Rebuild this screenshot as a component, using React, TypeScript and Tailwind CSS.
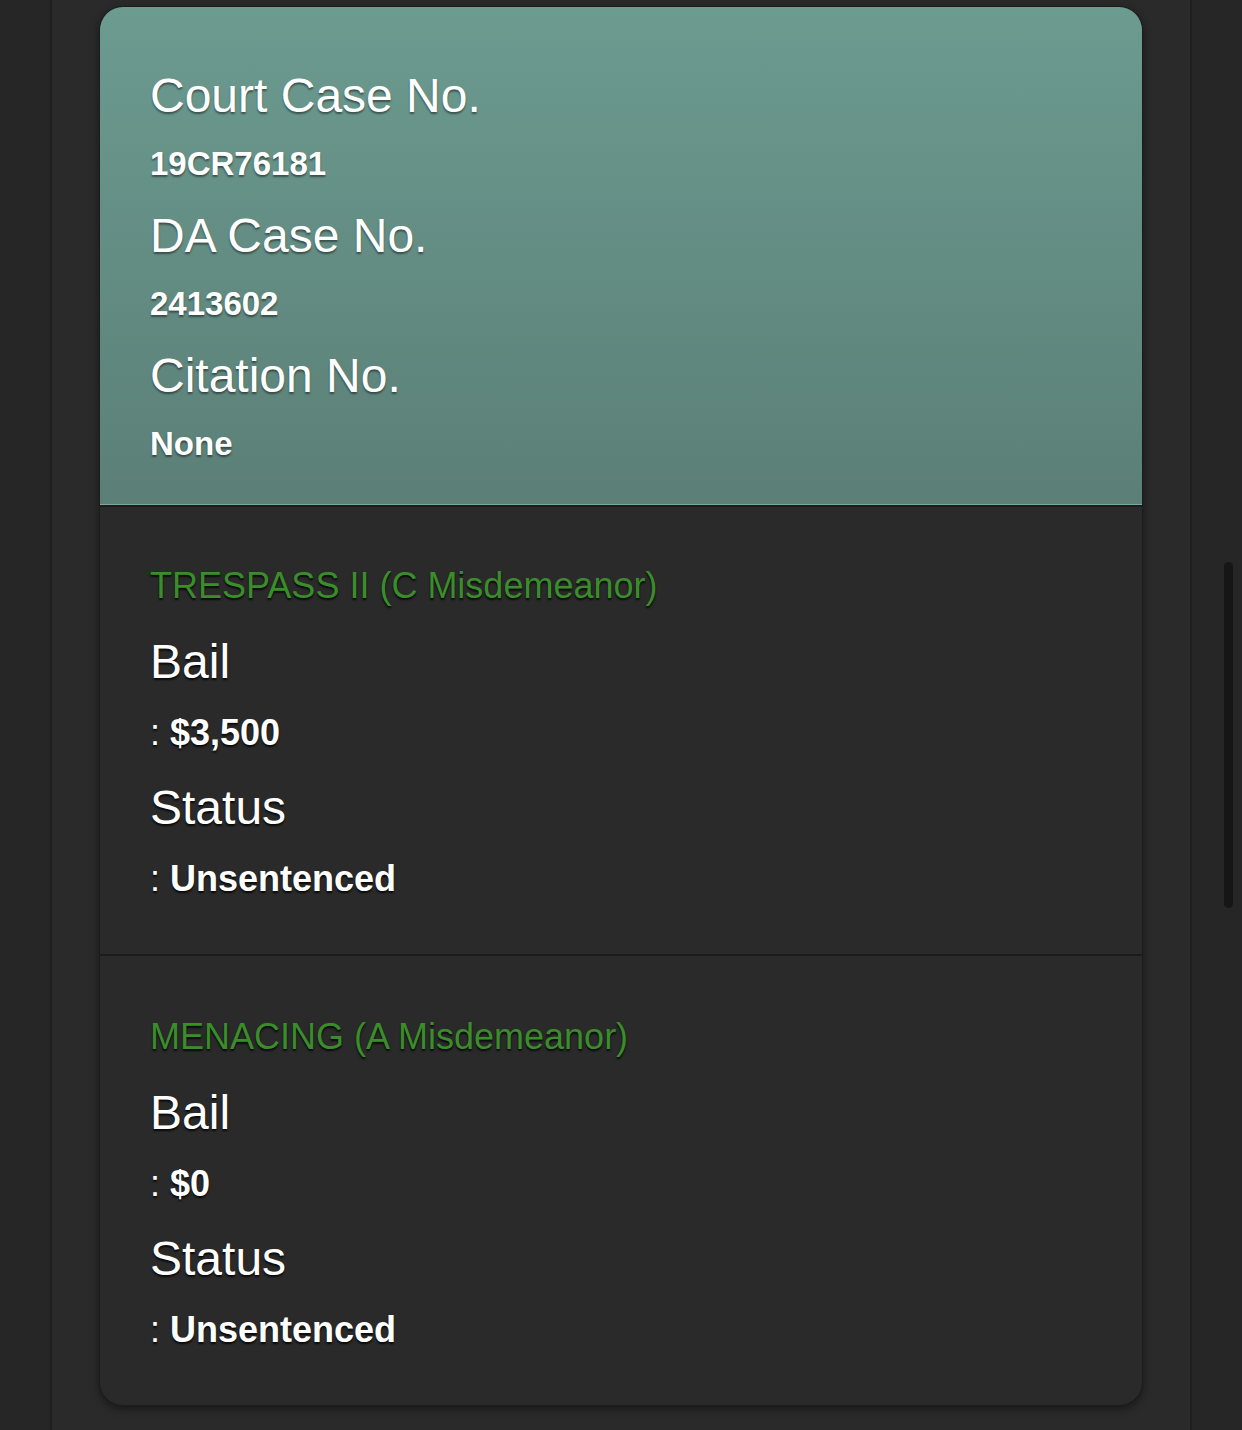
import React from "react";

const font = { fontFamily: '"Liberation Sans", Arial, Helvetica, sans-serif' };

function HeaderItem({ label, value, first }: { label: string; value: string; first?: boolean }) {
  return (
    <div className={first ? "" : "mt-[24px]"}>
      <div className="text-[48px] leading-[56px] text-white [text-shadow:0_2px_2px_rgba(0,0,0,0.45)]">{label}</div>
      <div className="mt-[20px] text-[33px] leading-[40px] font-bold text-white [text-shadow:0_2px_2px_rgba(0,0,0,0.45)]">{value}</div>
    </div>
  );
}

function Charge({ title, bail, last }: { title: string; bail: string; last?: boolean }) {
  return (
    <div className={"pl-[50px] pr-[48px] pb-[53px] " + (last ? "pt-[59px]" : "pt-[57px] border-b-2 border-[#1c1c1c]")}>
      <div className="text-[36px] leading-[44px] text-[#3b8c2a] [text-shadow:0_2px_2px_rgba(0,0,0,0.8)]">{title}</div>
      <div className="mt-[26px] text-[48px] leading-[56px] text-white [text-shadow:0_2px_2px_rgba(0,0,0,0.8)]">Bail</div>
      <div className="mt-[21px] text-[36px] leading-[44px] text-white [text-shadow:0_2px_2px_rgba(0,0,0,0.8)]">
        : <span className="font-bold">{bail}</span>
      </div>
      <div className="mt-[25px] text-[48px] leading-[56px] text-white [text-shadow:0_2px_2px_rgba(0,0,0,0.8)]">Status</div>
      <div className="mt-[21px] text-[36px] leading-[44px] text-white [text-shadow:0_2px_2px_rgba(0,0,0,0.8)]">
        : <span className="font-bold">Unsentenced</span>
      </div>
    </div>
  );
}

export default function App() {
  return (
    <div style={font} className="w-[1242px] h-[1430px] bg-[#262626] flex overflow-hidden">
      <div className="w-[50px] shrink-0 bg-[#262626]" />
      <div className="w-[1142px] shrink-0 bg-[#2a2a2a] border-l-2 border-r-2 border-[#1f1f1f] pt-[6px] pl-[47px] pr-[47px]">
        <div className="rounded-[24px] bg-[#2a2a2a] border border-[#1c1c1c] shadow-[0_3px_8px_rgba(0,0,0,0.45)] overflow-hidden">
          <div className="bg-gradient-to-b from-[#6c9b90] to-[#5b7f77] pl-[50px] pr-[48px] pt-[61px] pb-[40px] border-b border-[#7ea89d]">
            <HeaderItem label="Court Case No." value="19CR76181" first />
            <HeaderItem label="DA Case No." value="2413602" />
            <HeaderItem label="Citation No." value="None" />
          </div>
          <div className="border-t-2 border-[#1c1c1c]">
            <Charge title="TRESPASS II (C Misdemeanor)" bail="$3,500" />
            <Charge title="MENACING (A Misdemeanor)" bail="$0" last />
          </div>
        </div>
      </div>
      <div className="flex-1 relative bg-[#262626]">
        <div className="absolute left-[32px] top-[562px] w-[9px] h-[346px] rounded-full bg-[#161616]" />
      </div>
    </div>
  );
}
